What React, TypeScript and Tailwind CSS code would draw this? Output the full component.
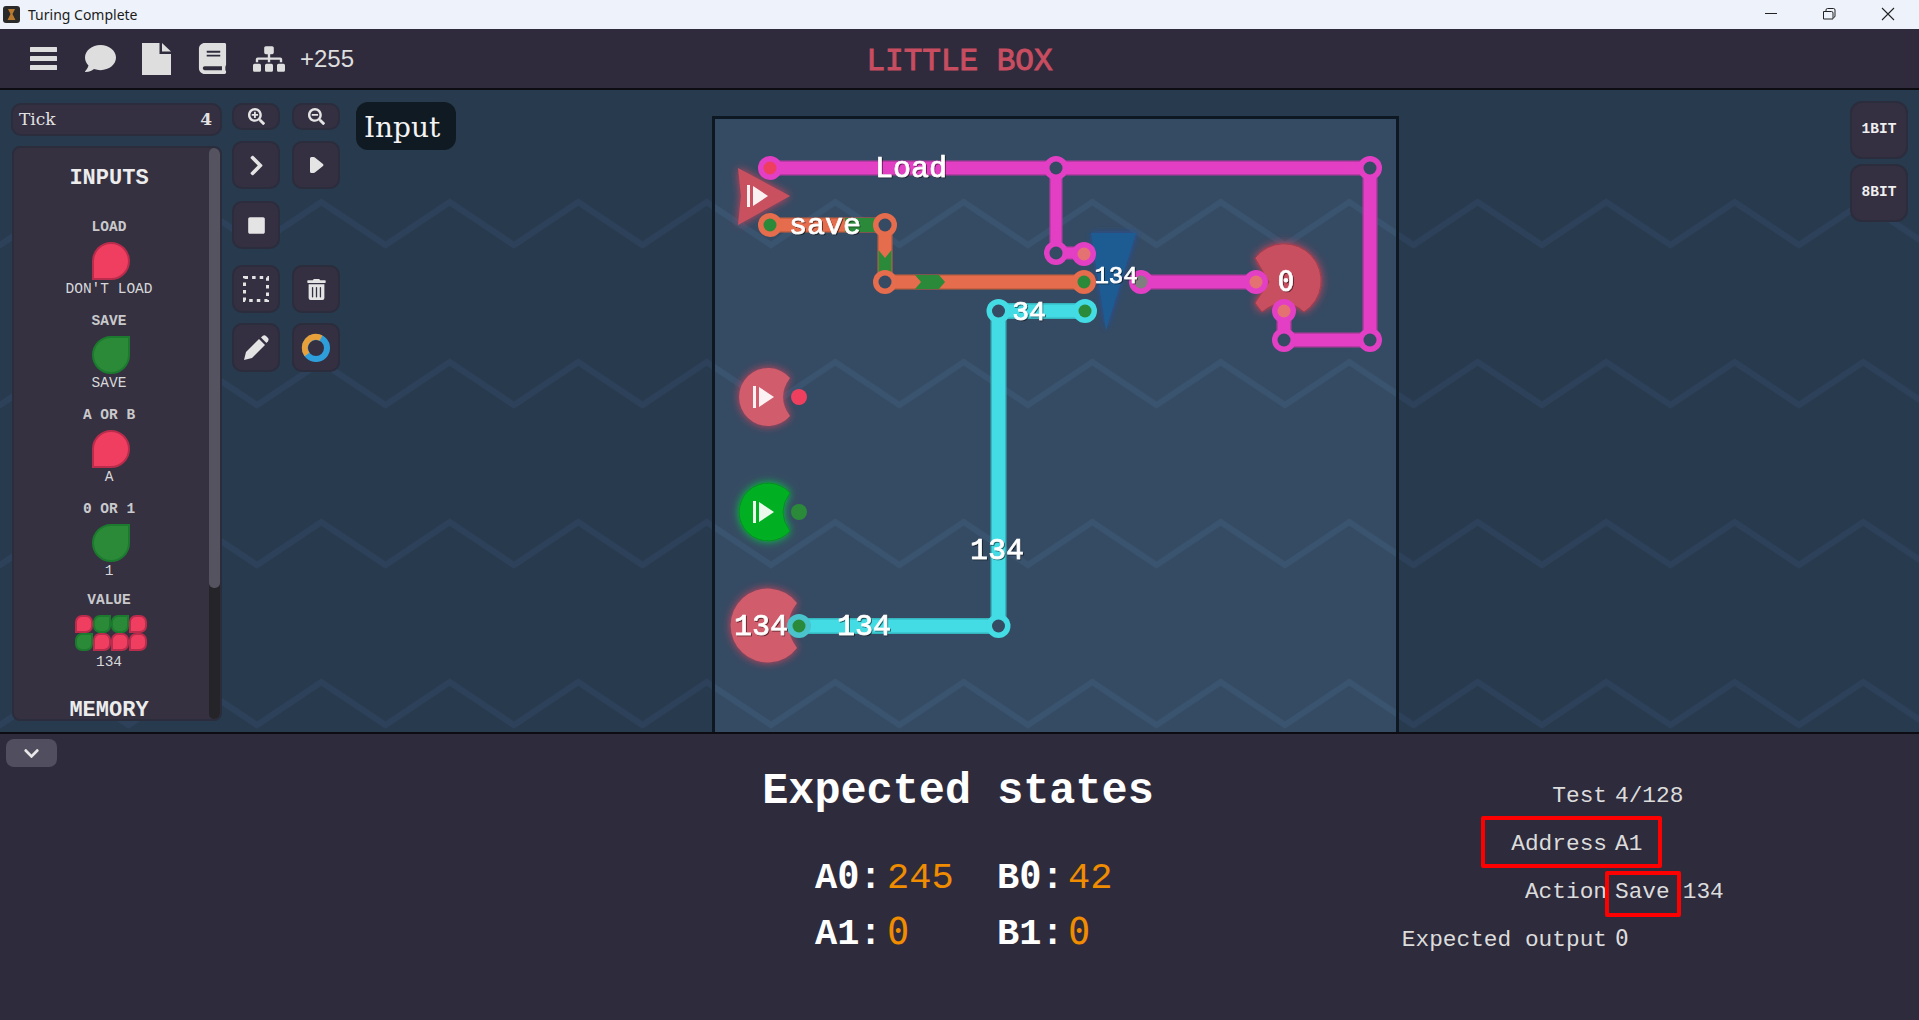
import { FaBook, FaChevronDown, FaChevronRight, FaComment, FaSearchMinus, FaSearchPlus, FaSitemap, FaStop, FaTrashAlt } from "react-icons/fa";
import type { ReactNode } from "react";

const mono = "font-['Liberation_Mono','DejaVu_Sans_Mono',monospace]";
const slab = "font-['DejaVu_Serif','Liberation_Serif',serif]";

// the game font has a slashed zero, DejaVu's is the nearest
function Zero() {
  return <span className="font-['DejaVu_Sans_Mono',monospace] leading-[0]">0</span>;
}

// chevrons behind the canvas, page coordinates
function Chevrons({ id, color }: { id: string; color: string }) {
  return (
    <>
      <defs>
        <pattern id={id} x="0" y="182" width="128.5" height="160" patternUnits="userSpaceOnUse">
          <path d="M-15 73 L0 63 L64.25 20 L128.5 63 L143 73" fill="none" stroke={color} strokeWidth="6" />
        </pattern>
      </defs>
      <rect x="0" y="0" width="1919" height="1020" fill={`url(#${id})`} />
    </>
  );
}

function ToolButton({ children, className = "h-[48px]" }: { children: ReactNode; className?: string }) {
  return (
    <div className={`flex w-[48px] items-center justify-center rounded-[10px] border-2 border-[#2b2c3c] bg-[#352f42] text-[#e4e4e4] ${className}`}>
      {children}
    </div>
  );
}

function Drop({ on }: { on: boolean }) {
  const color = on
    ? "rounded-full rounded-bl-none border-[#b92c4b] bg-[#ef3e60]"
    : "rounded-full rounded-tr-none border-[#1c7a2e] bg-[#2a8a38]";
  return <div className={`h-[38px] w-[38px] border-[2px] ${color}`} />;
}

function Bit({ on }: { on: boolean }) {
  const color = on
    ? "rounded-[7px] rounded-bl-none border-[#b92c4b] bg-[#ef3e60]"
    : "rounded-[7px] rounded-tr-none border-[#1c7a2e] bg-[#2a8a38]";
  return <div className={`h-[18px] w-[18px] border-[2px] ${color}`} />;
}

function InputItem({ label, value, height = "h-[94px]", children }: { label: ReactNode; value: string; height?: string; children: ReactNode }) {
  return (
    <div className={`flex flex-col items-center ${height}`}>
      <div className="h-[18px] text-[14.5px] leading-[18px] font-bold whitespace-pre text-[#c9c9cc]">{label}</div>
      <div className="mt-[6px] ml-[3px]">{children}</div>
      <div className="h-[18px] text-[14.5px] leading-[18px] whitespace-pre text-[#d8d8da]">{value}</div>
    </div>
  );
}

function Sidebar() {
  const bits = [true, false, false, true, false, true, true, true];
  return (
    <div className={`w-[211px] ${mono}`}>
      <div className={`flex h-[33px] items-center justify-between rounded-[10px] border-2 border-[#2b2c3c] bg-[#352f42] pr-[8px] pl-[6px] text-[17px] text-[#e2e2e2] ${slab}`}>
        <span>Tick</span>
        <span className="font-bold">4</span>
      </div>
      <div className="relative mt-[10px] ml-[1px] h-[575px] w-[210px] overflow-hidden rounded-[8px] border-2 border-[#2b2c3c] bg-[#353141]">
        <div className="w-[190px] pt-[14px]">
          <div className="h-[34px] text-center text-[22px] leading-[34px] font-bold text-[#ececec]">INPUTS</div>
          <div className="mt-[22px]">
            <InputItem label="LOAD" value="DON'T LOAD"><Drop on /></InputItem>
            <InputItem label="SAVE" value="SAVE"><Drop on={false} /></InputItem>
            <InputItem label="A OR B" value="A"><Drop on /></InputItem>
            <InputItem label={<><Zero /> OR 1</>} value="1" height="h-[91px]"><Drop on={false} /></InputItem>
            <InputItem label="VALUE" value="134" height="h-[92px]">
              <div className="mb-[2px] grid grid-cols-4">
                {bits.map((on, i) => (
                  <Bit key={i} on={on} />
                ))}
              </div>
            </InputItem>
          </div>
          <div className="mt-[16px] h-[24px] text-center text-[22px] leading-[24px] font-bold text-[#ececec]">MEMORY</div>
        </div>
        <div className="absolute top-0 right-0 h-full w-[11px] rounded-[5px] bg-[#252429]">
          <div className="h-[440px] rounded-[5px] bg-[#555360]" />
        </div>
      </div>
    </div>
  );
}

function Tools() {
  return (
    <div className="flex w-[108px] flex-col">
      <div className="flex gap-[12px]">
        <ToolButton className="h-[27px]"><FaSearchPlus size={17} /></ToolButton>
        <ToolButton className="h-[27px]"><FaSearchMinus size={17} /></ToolButton>
      </div>
      <div className="mt-[11px] flex gap-[12px]">
        <ToolButton><FaChevronRight size={23} /></ToolButton>
        <ToolButton>
          <svg width="15" height="18" viewBox="0 0 15 18"><path d="M1 2.5 Q1 1 2.5 1 H4.5 Q5.5 1 6.5 2 L14 8 Q15 9 14 10 L6.5 16 Q5.5 17 4.5 17 H2.5 Q1 17 1 15.5 Z" fill="#e4e4e4" /></svg>
        </ToolButton>
      </div>
      <div className="mt-[12px] flex">
        <ToolButton><FaStop size={19} /></ToolButton>
      </div>
      <div className="mt-[16px] flex gap-[12px]">
        <ToolButton>
          <svg width="26" height="26" viewBox="0 0 26 26">
            <rect x="1.5" y="1.5" width="23" height="23" fill="none" stroke="#e4e4e4" strokeWidth="3" strokeDasharray="3.5 4.1" />
          </svg>
        </ToolButton>
        <ToolButton><FaTrashAlt size={21} /></ToolButton>
      </div>
      <div className="mt-[10px] flex gap-[12px]">
        <ToolButton className="h-[49px]">
          <svg width="25" height="25" viewBox="0 0 25 25" fill="#e4e4e4">
            <path d="M0 25 L2 17 L15 4 L21 10 L8 23 Z" />
            <path d="M17 2.5 L18.8 0.8 Q20.5 -0.3 22 1 L24 3 Q25.2 4.5 24 6.2 L22.4 8 Z" />
          </svg>
        </ToolButton>
        <ToolButton className="h-[49px]">
          <svg width="30" height="30" viewBox="0 0 30 30">
            <circle cx="15" cy="15" r="11" fill="none" stroke="#2f9fdc" strokeWidth="6" />
            <path d="M6 21.5 A11 11 0 0 1 20 5.2" fill="none" stroke="#e8a13a" strokeWidth="6" />
          </svg>
        </ToolButton>
      </div>
    </div>
  );
}

function Wire({ d, color, edge, width = 15 }: { d: string; color: string; edge: string; width?: number }) {
  return (
    <>
      <path d={d} fill="none" stroke={edge} strokeWidth={width} />
      <path d={d} fill="none" stroke={color} strokeWidth={width - 3} />
    </>
  );
}

function Node({ x, y, color, inner = "#354b63" }: { x: number; y: number; color: string; inner?: string }) {
  return (
    <>
      <circle cx={x} cy={y} r="12" fill={color} />
      <circle cx={x} cy={y} r="6.5" fill={inner} />
    </>
  );
}

function Label({ x, y, size = 30, family = "'Liberation Mono', monospace", children }: { x: number; y: number; size?: number; family?: string; children: string }) {
  return (
    <text
      x={x}
      y={y + size * 0.31}
      textAnchor="middle"
      fontSize={size}
      fontFamily={family}
      fill="#fff"
      stroke="#fff"
      strokeWidth="0.7"
      filter="url(#labelShadow)"
    >
      {children}
    </text>
  );
}

function PlayMark({ x, y }: { x: number; y: number }) {
  return (
    <path
      d={`M${x} ${y - 11} h3 v22 h-3 Z M${x + 6} ${y - 10} L${x + 21} ${y} L${x + 6} ${y + 10} Z`}
      fill="#fff"
      fillOpacity="0.92"
    />
  );
}

const magenta = "#e33fc5";
const orange = "#e56c4c";
const cyan = "#43dbe4";
const green = "#2b8a3a";
const pink = "#e57272";

function Board() {
  return (
    <div className="mt-[13px] ml-[256px] h-[632px] w-[687px] shrink-0 border-x-[3px] border-t-[3px] border-[#0e1822] bg-[#354b63]">
      <svg width="681" height="628" viewBox="715 119 681 628" className="block">
        <defs>
          <filter id="labelShadow" x="-20%" y="-20%" width="140%" height="140%">
            <feDropShadow dx="1" dy="1" stdDeviation="0.6" floodColor="#000" floodOpacity="0.55" />
          </filter>
          <filter id="glowRed" x="-40%" y="-40%" width="180%" height="180%">
            <feDropShadow dx="0" dy="0" stdDeviation="4" floodColor="#ff4058" floodOpacity="0.8" />
          </filter>
          <filter id="glowGreen" x="-40%" y="-40%" width="180%" height="180%">
            <feDropShadow dx="0" dy="0" stdDeviation="4" floodColor="#00e040" floodOpacity="0.8" />
          </filter>
          <filter id="glowBlue" x="-40%" y="-40%" width="180%" height="180%">
            <feDropShadow dx="0" dy="0" stdDeviation="3" floodColor="#1c50c0" floodOpacity="0.7" />
          </filter>
        </defs>
        <Chevrons id="boardChevrons" color="#3a536f" />

        {/* save wire */}
        <Wire d="M770 225 H885 V282 H1084" color={orange} edge="#c9603f" />
        <path d="M845 225 H878" stroke={green} strokeWidth="14" fill="none" />
        <path d="M878.5 250 L885 258 L891.5 250 V272 L885 280 L878.5 272 Z" fill={green} />
        <path d="M915 275 h24 l6 7 l-6 7 h-24 l6 -7 Z" fill={green} />

        {/* load wire */}
        <Wire d="M770 168 H1370 V340 H1284 V311" color={magenta} edge="#b83aa3" />
        <Wire d="M1056 168 V253 H1084" color={magenta} edge="#c23cab" width={13} />
        <Wire d="M1141 282 H1256" color={magenta} edge="#b83aa3" />

        {/* value wire */}
        <Wire d="M1085 311 H998.5 V626 H799" color={cyan} edge="#35b5bd" width={16} />

        {/* components */}
        <g filter="url(#glowRed)">
          <path d="M738 168 L790 196 L738 225 L741 196 Z" fill="#c9515f" />
        </g>
        <PlayMark x={747} y={196} />
        <g filter="url(#glowBlue)">
          <path d="M1091 233 H1136 L1106 330 Z" fill="#1e5c92" />
        </g>
        <g filter="url(#glowRed)">
          <path d="M1304 312 A37 37 0 1 0 1255 258 L1269 282 L1255 303 L1262 312 Q1284 294 1304 312 Z" fill="#c84f5f" stroke="#a33c4c" strokeWidth="1" />
          <path d="M790 378 A29 29 0 1 0 790 416 Q776 397 790 378 Z" fill="#d05c6c" />
          <path d="M797 603 A37 37 0 1 0 797 648 Q780 625 797 603 Z" fill="#d05c6c" />
        </g>
        <g filter="url(#glowGreen)">
          <path d="M790 493 A29 29 0 1 0 790 531 Q776 512 790 493 Z" fill="#00b020" stroke="#0a8a20" strokeWidth="1" />
        </g>
        <PlayMark x={753} y={397} />
        <PlayMark x={753} y={512} />

        {/* pins */}
        <Node x={770} y={168} color={magenta} inner="#ee3f5f" />
        <Node x={1056} y={168} color={magenta} />
        <Node x={1370} y={168} color={magenta} />
        <Node x={1056} y={253} color={magenta} />
        <Node x={1084} y={254} color={magenta} inner={pink} />
        <Node x={1141} y={282} color={magenta} inner="#7f7f7f" />
        <Node x={1256} y={282} color={magenta} inner={pink} />
        <Node x={1284} y={311} color={magenta} inner={pink} />
        <Node x={1284} y={340} color={magenta} />
        <Node x={1370} y={340} color={magenta} />
        <Node x={770} y={225} color={orange} inner={green} />
        <Node x={885} y={225} color={orange} />
        <Node x={885} y={282} color={orange} />
        <Node x={1084} y={282} color={orange} inner={green} />
        <Node x={998.5} y={311} color={cyan} />
        <Node x={1085} y={311} color={cyan} inner={green} />
        <Node x={998.5} y={626} color={cyan} />
        <Node x={799} y={626} color="#4bc3cc" inner={green} />
        <circle cx="799" cy="397" r="8" fill="#ee3f5f" />
        <circle cx="799" cy="512" r="8" fill={green} />

        {/* labels */}
        <Label x={911} y={168}>Load</Label>
        <Label x={825} y={225}>save</Label>
        <Label x={1116} y={276} size={24}>134</Label>
        <Label x={1029} y={311} size={28}>34</Label>
        <Label x={1286} y={282} size={28} family="'DejaVu Sans Mono', monospace">0</Label>
        <Label x={997} y={550}>134</Label>
        <Label x={864} y={626}>134</Label>
        <Label x={761} y={626}>134</Label>
      </svg>
    </div>
  );
}

function BitButton({ children }: { children: string }) {
  return (
    <div className={`flex h-[58px] w-[58px] items-center justify-center rounded-[12px] border-2 border-[#2b2c3c] bg-[#352f42] text-[14.5px] font-bold text-[#efefef] ${mono}`}>
      {children}
    </div>
  );
}

function Canvas() {
  return (
    <div className="relative flex h-[644px] overflow-hidden border-b-2 border-[#0c0c12] bg-[#283a4e] pt-[13px] pl-[11px]">
      <svg className="absolute inset-0" width="1919" height="644" viewBox="0 90 1919 644">
        <Chevrons id="canvasChevrons" color="#2d415a" />
      </svg>
      <div className="relative flex">
        <Sidebar />
        <div className="ml-[10px]">
          <Tools />
        </div>
        <div className={`mt-[-1px] ml-[16px] flex h-[48px] w-[100px] items-center rounded-[12px] bg-[#101a22] pt-[3px] pl-[8px] text-[28px] text-[#f4f4f4] ${slab}`}>
          Input
        </div>
        <Board />
        <div className="mt-[-2px] ml-[451px] flex flex-col gap-[5px]">
          <BitButton>1BIT</BitButton>
          <BitButton>8BIT</BitButton>
        </div>
      </div>
    </div>
  );
}

function TopBar() {
  return (
    <div className="relative flex h-[61px] items-center border-b-2 border-[#0c0c12] bg-[#2f2b3d] pl-[30px] text-[#dedede]">
      <svg width="27" height="23" viewBox="0 0 27 23" fill="#dedede">
        <rect width="27" height="5" rx="0.5" />
        <rect y="9" width="27" height="5" rx="0.5" />
        <rect y="18" width="27" height="5" rx="0.5" />
      </svg>
      <FaComment size={31} className="ml-[28px]" />
      <svg width="29" height="32" viewBox="0 0 29 32" fill="#dedede" className="ml-[26px]">
        <path d="M0 0 H17.5 V11 H29 V32 H0 Z" />
        <path d="M20 0 L29 8.5 H20 Z" />
      </svg>
      <FaBook size={31} className="ml-[26px]" />
      <FaSitemap size={32} className="ml-[25px]" />
      <span className="ml-[15px] font-['Liberation_Sans',Arial,sans-serif] text-[24px]">+255</span>
      <div className={`absolute inset-x-0 top-[10px] text-center text-[31px] font-normal text-[#c84d60] [-webkit-text-stroke:1px_#c84d60] ${mono}`}>LITTLE BOX</div>
    </div>
  );
}

function TitleBar() {
  return (
    <div className="flex h-[29px] items-center bg-[#eef3fb] pl-[3px] font-['Noto_Sans','Open_Sans',sans-serif] text-[14px] text-[#1c1c1c]">
      <svg width="17" height="17" viewBox="0 0 17 17">
        <rect width="17" height="17" rx="3" fill="#2a2a2a" />
        <path d="M5 3 H12 L9.5 8 L12.5 14 H4.5 L7.5 8 Z" fill="#b8792e" />
      </svg>
      <span className="ml-[8px]">Turing Complete</span>
      <div className="ml-auto flex items-center">
        <svg width="160" height="29" viewBox="1759 0 160 29">
          <path d="M1765 13.5 H1777" stroke="#222" strokeWidth="1" />
          <path d="M1823.5 11.5 h8 a1.5 1.5 0 0 1 1.5 1.5 v6 h-9.5 Z M1826 11 v-1 a1.5 1.5 0 0 1 1.5 -1.5 h6 a1.5 1.5 0 0 1 1.5 1.5 v6 a1.5 1.5 0 0 1 -1.5 1.5" fill="none" stroke="#222" strokeWidth="1" />
          <path d="M1882 8 L1894 20 M1894 8 L1882 20" stroke="#222" strokeWidth="1.1" />
        </svg>
      </div>
    </div>
  );
}

function BottomPanel() {
  return (
    <div className={`flex h-[286px] bg-[#2e2b3c] ${mono}`}>
      <div className="w-[700px] pt-[5px] pl-[6px]">
        <div className="flex h-[28px] w-[51px] items-center justify-center rounded-[8px] bg-[#514e60] text-[#e8e8e8]">
          <FaChevronDown size={17} />
        </div>
      </div>
      <div className="w-[516px] pt-[36px]">
        <div className="text-center text-[43.5px] leading-[44px] font-bold text-white">Expected states</div>
        <div className="mt-[36px] ml-[115px] grid grid-cols-[72px_110px_71px_auto] text-[37px] leading-[56px]">
          <span className="font-bold text-white">A<Zero />:</span>
          <span className="text-[#f08c00]">245</span>
          <span className="font-bold text-white">B<Zero />:</span>
          <span className="text-[#f08c00]">42</span>
          <span className="font-bold text-white">A1:</span>
          <span className="text-[#f08c00]"><Zero /></span>
          <span className="font-bold text-white">B1:</span>
          <span className="text-[#f08c00]"><Zero /></span>
        </div>
      </div>
      <div className="relative mt-[38px] ml-[185px] h-[192px] w-[401px] text-[22.8px] leading-[48px] text-[#dcdcdc]">
        <div className="grid grid-cols-[206px_auto] gap-x-[8px] whitespace-nowrap">
          <span className="text-right">Test</span>
          <span>4/128</span>
          <span className="text-right">Address</span>
          <span>A1</span>
          <span className="text-right">Action</span>
          <span>Save<span className="ml-[13px]">134</span></span>
          <span className="text-right">Expected output</span>
          <span><Zero /></span>
        </div>
        <div className="absolute top-[44px] left-[80px] h-[52px] w-[181px] rounded-[2px] border-[4px] border-[#fe0000]" />
        <div className="absolute top-[99px] left-[204px] h-[46px] w-[76px] rounded-[2px] border-[4px] border-[#fe0000]" />
      </div>
    </div>
  );
}

export default function App() {
  return (
    <div className="flex h-[1020px] w-[1919px] flex-col overflow-hidden bg-[#2e2b3c]">
      <TitleBar />
      <TopBar />
      <Canvas />
      <BottomPanel />
    </div>
  );
}
